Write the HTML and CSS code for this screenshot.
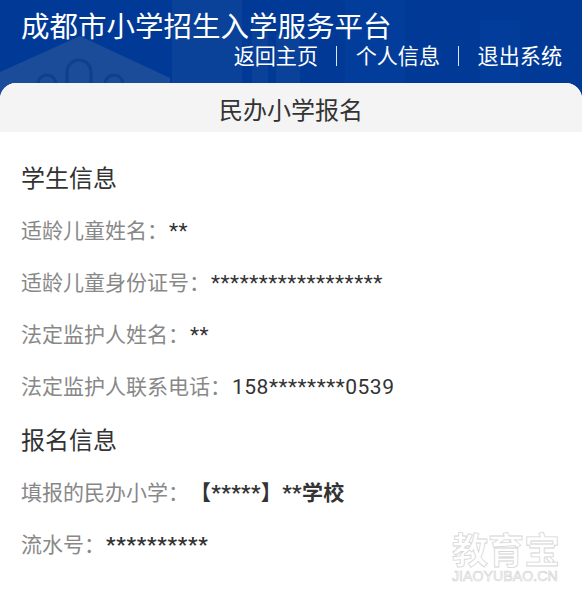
FILE: index.html
```html
<!DOCTYPE html>
<html lang="zh-CN">
<head>
<meta charset="utf-8">
<title>民办小学报名</title>
<link rel="stylesheet" href="styles.css">
</head>
<body>
<header class="top">
  <svg class="top-art" viewBox="0 0 582 96" preserveAspectRatio="none" aria-hidden="true">
    <path class="art-a" d="M0 72 L80 36 L170 78 L170 96 L0 96Z"/>
    <path class="art-b" d="M38 84a9 9 0 0 1 18 0M67 84V72a12 12 0 0 1 24 0v12M105 84a9 9 0 0 1 18 0"/>
    <path class="art-c" d="M172 0h70v96h-70zM252 14h16v70h-16zM276 34h24v62h-24z"/>
    <path class="art-d" d="M345 0h60v96h-60zM480 20h40v76h-40z"/>
  </svg>
  <h1 class="site-title">成都市小学招生入学服务平台</h1>
  <nav class="top-nav">
    <a>返回主页</a><span class="sep"></span><a>个人信息</a><span class="sep"></span><a>退出系统</a>
  </nav>
</header>
<main class="card">
  <h2 class="page-title">民办小学报名</h2>
  <section class="body">
    <h3 class="sec">学生信息</h3>
    <p class="row"><span class="lab">适龄儿童姓名：</span><span class="val">**</span></p>
    <p class="row"><span class="lab">适龄儿童身份证号：</span><span class="val">******************</span></p>
    <p class="row"><span class="lab">法定监护人姓名：</span><span class="val">**</span></p>
    <p class="row"><span class="lab">法定监护人联系电话：</span><span class="val">158********0539</span></p>
    <h3 class="sec sec-2">报名信息</h3>
    <p class="row"><span class="lab">填报的民办小学：</span><b class="val school">【*****】**学校</b></p>
    <p class="row"><span class="lab">流水号：</span><b class="val serial">**********</b></p>
  </section>
</main>
<div class="mark">
  <div class="mark-cn">教育宝</div>
  <div class="mark-en">JIAOYUBAO.CN</div>
</div>
</body>
</html>
```
FILE: styles.css
```css
* { box-sizing: border-box; }
html, body { margin: 0; padding: 0; }
body {
  position: relative;
  width: 582px;
  height: 605px;
  overflow: hidden;
  background: #fff;
  font-family: "Open Sans", "Noto Sans CJK SC", sans-serif;
  color: #333;
  text-spacing-trim: space-all;
}
.top {
  position: relative;
  height: 96px;
  padding: 8px 20px 0 21px;
  background: #013a96;
  color: #fff;
}
.top-art { position: absolute; left: 0; top: 0; width: 100%; height: 100%; }
.art-a { fill: #1a4c9a; }
.art-b { fill: none; stroke: #0f3f8e; stroke-width: 3; }
.art-c { fill: #0a4299; }
.art-d { fill: #023d9b; }
.site-title {
  position: relative;
  margin: 0;
  font-size: 28.5px;
  line-height: 36px;
  font-weight: 400;
  white-space: nowrap;
}
.top-nav {
  position: relative;
  display: flex;
  justify-content: flex-end;
  align-items: center;
  height: 24px;
  font-size: 21.1px;
  line-height: 24px;
}
.sep { width: 1px; height: 20px; margin: 0 18.3px; background: #dfe7f5; }
.card {
  position: relative;
  margin-top: -13px;
  border-radius: 16px 16px 0 0;
  background: #fff;
  overflow: hidden;
}
.page-title {
  margin: 0;
  height: 49px;
  background: #f4f4f4;
  text-align: center;
  font-size: 24px;
  line-height: 53px;
  font-weight: 400;
  color: #333;
}
.body { padding: 24px 21px 0; }
.sec {
  margin: 0;
  font-size: 24px;
  line-height: 44px;
  font-weight: 400;
  color: #333;
}
.sec-2 { margin-top: 2px; }
.row {
  margin: 0;
  height: 52px;
  font-size: 21px;
  line-height: 44px;
  white-space: nowrap;
}
.sec + .row { margin-top: 8px; }
.lab { color: #888; }
.val { margin-left: 1px; font-family: Roboto, "Noto Sans CJK SC", sans-serif; letter-spacing: 0.5px; }
.school { font-weight: 700; letter-spacing: 0.36px; }
.serial { font-weight: 700; letter-spacing: 0.7px; }
.mark {
  position: absolute;
  left: 452px;
  top: 530px;
  width: 110px;
  color: #fff;
  -webkit-text-stroke: 0.8px #d6d6d6;
  font-family: "Noto Sans CJK SC", sans-serif;
}
.mark-cn { font-size: 36px; line-height: 36px; font-weight: 700; white-space: nowrap; }
.mark-en {
  margin-top: 3px;
  font-family: "Liberation Sans", sans-serif;
  font-size: 14.2px;
  line-height: 14px;
  white-space: nowrap;
  -webkit-text-stroke: 0.6px #d0d0d0;
}
```
